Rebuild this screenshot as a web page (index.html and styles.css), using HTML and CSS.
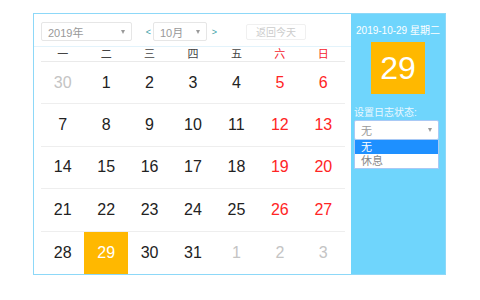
FILE: index.html
```html
<!DOCTYPE html>
<html>
<head>
<meta charset="utf-8">
<link rel="stylesheet" href="styles.css">
</head>
<body>
<div class="cal">
  <div class="main">
    <div class="toolbar">
      <div class="sel year"><span>2019年</span><i class="caret"></i></div>
      <span class="arrow prev">&lt;</span>
      <div class="sel month"><span>10月</span><i class="caret"></i></div>
      <span class="arrow next">&gt;</span>
      <div class="btn">返回今天</div>
    </div>
    <div class="week">
      <div>一</div><div>二</div><div>三</div><div>四</div><div>五</div><div class="red">六</div><div class="red">日</div>
    </div>
    <div class="days">
      <div class="day other">30</div><div class="day">1</div><div class="day">2</div><div class="day">3</div><div class="day">4</div><div class="day red">5</div><div class="day red">6</div>
      <div class="day">7</div><div class="day">8</div><div class="day">9</div><div class="day">10</div><div class="day">11</div><div class="day red">12</div><div class="day red">13</div>
      <div class="day">14</div><div class="day">15</div><div class="day">16</div><div class="day">17</div><div class="day">18</div><div class="day red">19</div><div class="day red">20</div>
      <div class="day">21</div><div class="day">22</div><div class="day">23</div><div class="day">24</div><div class="day">25</div><div class="day red">26</div><div class="day red">27</div>
      <div class="day">28</div><div class="day today">29</div><div class="day">30</div><div class="day">31</div><div class="day other">1</div><div class="day other">2</div><div class="day other">3</div>
    </div>
  </div>
  <div class="side">
    <div class="date">2019-10-29 星期二</div>
    <div class="big">29</div>
    <div class="label">设置日志状态:</div>
    <div class="dd">
      <div class="sel status"><span>无</span><i class="caret"></i></div>
      <div class="opts">
        <div class="opt active">无</div>
        <div class="opt">休息</div>
      </div>
    </div>
  </div>
</div>
</body>
</html>
```
FILE: styles.css
```css
* { box-sizing: border-box; }
body {
  margin: 0;
  font-family: "Liberation Sans", Arial, "Noto Sans CJK SC", sans-serif;
  background: #fff;
}
.cal {
  margin: 13px 0 0 33px;
  width: 413px;
  height: 262px;
  border: 1px solid #8dd8f8;
  display: flex;
}
.main {
  width: 317px;
  padding: 0 6px 0 7px;
  display: flex;
  flex-direction: column;
}
.toolbar {
  height: 33px;
  display: flex;
  align-items: center;
  padding-top: 3px;
  border-bottom: 1px solid #e3f3fb;
  margin: 0 -6px 0 -7px;
  padding-left: 7px;
}
.sel {
  height: 19px;
  border: 1px solid #e6e6e6;
  border-radius: 2px;
  background: #fff;
  display: flex;
  align-items: center;
  justify-content: space-between;
  padding: 0 6px 0 6px;
  font-size: 11px;
  color: #999;
}
.caret {
  width: 0; height: 0;
  border-left: 2.5px solid transparent;
  border-right: 2.5px solid transparent;
  border-top: 4px solid #999;
}
.year { width: 91px; }
.month { width: 54px; margin-right: 4px; }
.arrow {
  font-size: 9px;
  color: #3a9fa8;
  width: 7px;
  text-align: center;
}
.prev { margin-left: 13px; margin-right: 1px; }
.btn {
  margin-left: 28px;
  width: 60px;
  height: 16px;
  border: 1px solid #f0f0f0;
  border-radius: 2px;
  font-size: 10px;
  color: #ccc;
  display: flex;
  align-items: center;
  justify-content: center;
}
.week {
  height: 15px;
  display: grid;
  grid-template-columns: repeat(7, 1fr);
  font-size: 11px;
  color: #444;
  text-align: center;
  line-height: 15px;
  border-bottom: 1px solid #eaeaea;
}
.red { color: #f5222d; }
.days {
  flex: 1;
  display: grid;
  grid-template-columns: repeat(7, 1fr);
  grid-template-rows: repeat(5, 1fr);
}
.day {
  display: flex;
  align-items: center;
  justify-content: center;
  font-size: 16px;
  color: #222;
  border-bottom: 1px solid #eeeeee;
}
.days .day:nth-last-child(-n+7) { border-bottom: none; }
.day.red { color: #ff2525; }
.day.other { color: #c4c4c4; }
.day.today { background: #ffb800; color: #fff; }
.side {
  flex: 1;
  background: #6fd5fc;
  display: flex;
  flex-direction: column;
  align-items: center;
  padding-top: 10px;
}
.date {
  font-size: 10px;
  color: #fff;
  height: 13px;
  line-height: 13px;
}
.big {
  margin-top: 5px;
  width: 54px;
  height: 52px;
  background: #ffb800;
  color: #fff;
  font-size: 32px;
  display: flex;
  align-items: center;
  justify-content: center;
}
.label {
  align-self: stretch;
  padding-left: 3px;
  margin-top: 12px;
  font-size: 10px;
  color: #eaf8ff;
  height: 13px;
  line-height: 13px;
}
.dd {
  align-self: stretch;
  margin: 1px 6px 0 3px;
}
.status {
  width: 100%;
  height: 20px;
  border-color: #a9c9f5;
  font-size: 11px;
}
.opts {
  border: 1px solid #a9c9f5;
  border-top: none;
  background: #fff;
}
.opt {
  height: 14px;
  line-height: 14px;
  font-size: 11px;
  color: #888;
  padding-left: 6px;
}
.opt.active { background: #1e90ff; color: #fff; }
```
